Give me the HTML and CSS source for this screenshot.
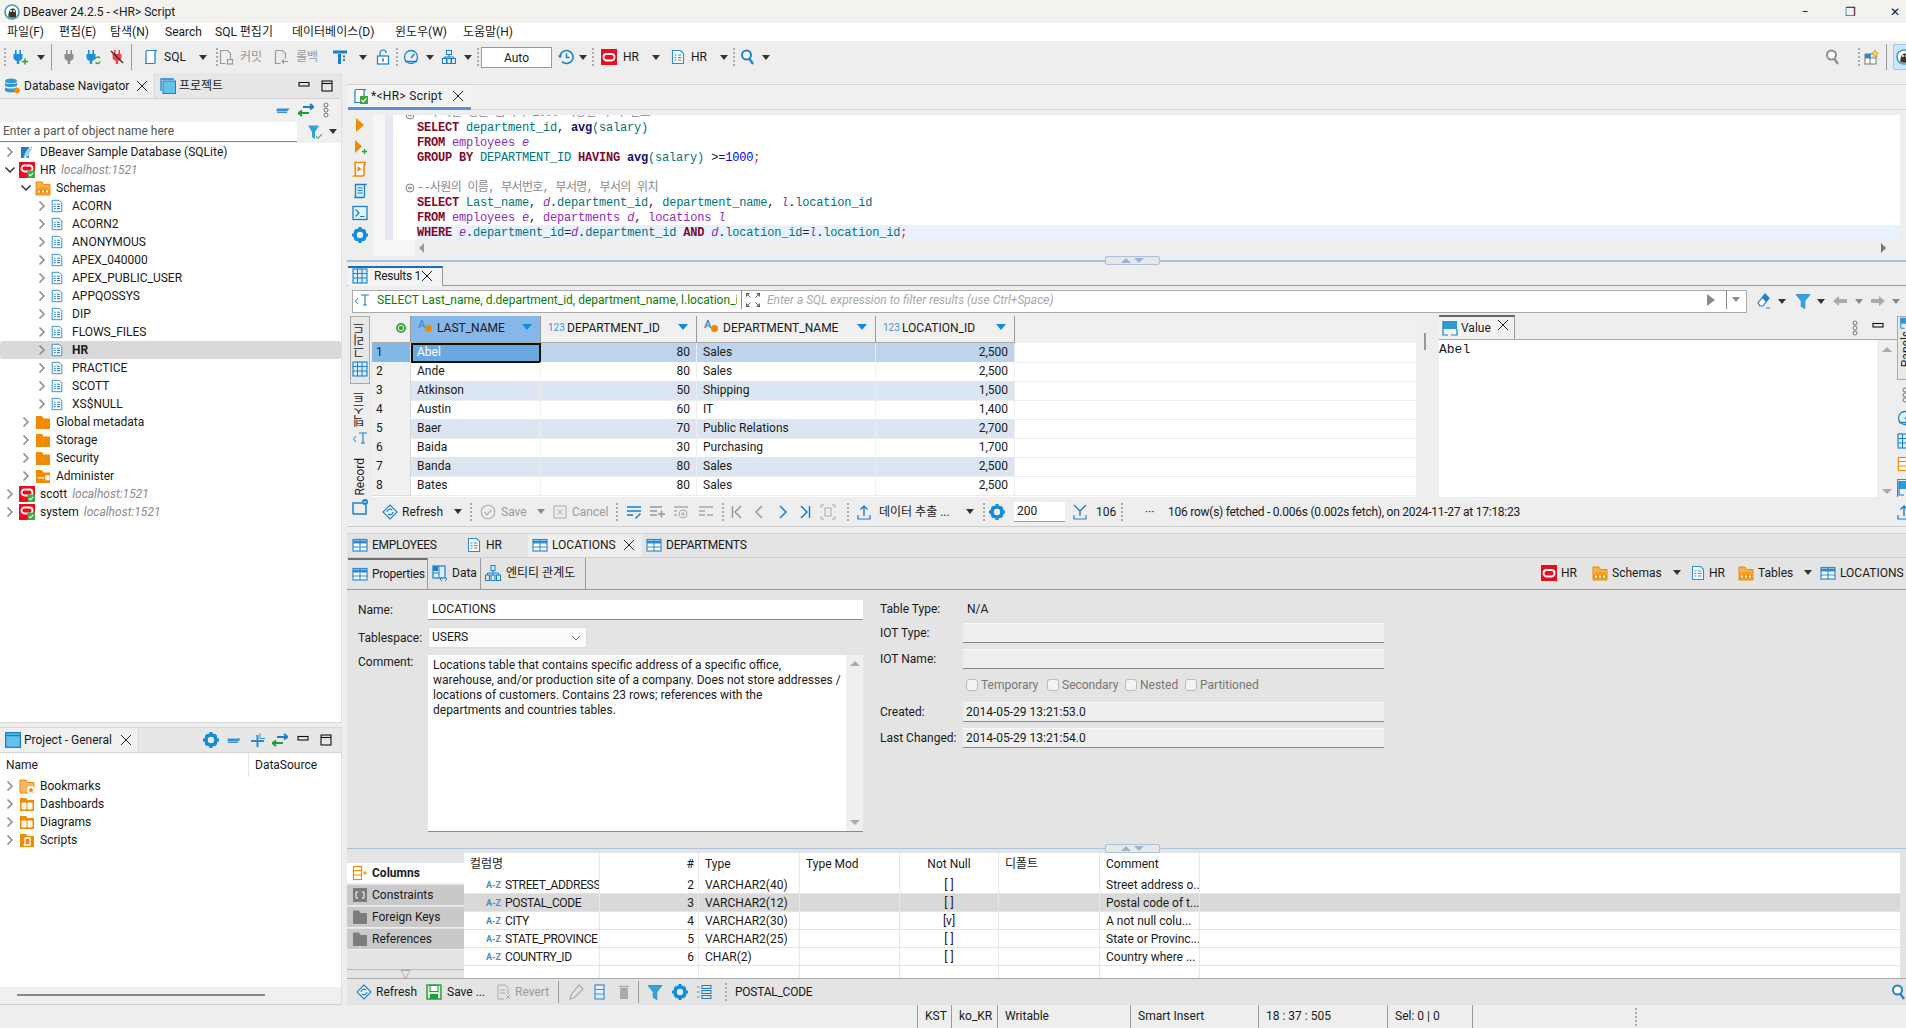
FILE: index.html
```html
<!DOCTYPE html>
<html lang="ko">
<head>
<meta charset="utf-8">
<title>DBeaver 24.2.5 - &lt;HR&gt; Script</title>
<link rel="stylesheet" href="styles.css">
</head>
<body>
<svg class="defs" xmlns="http://www.w3.org/2000/svg">
  <symbol id="plug" viewBox="0 0 16 16"><path fill="currentColor" d="M5 1h1.600v4H5zM9.400 1H11v4H9.400zM3.500 5h9v3.500c0 2-1.600 3.200-3.300 3.400V15H6.800v-3.100C5.100 11.700 3.500 10.500 3.500 8.500z"/></symbol>
  <symbol id="plug-add" viewBox="0 0 16 16"><path fill="#1b8fd8" d="M3 1h1.600v4H3zM7.400 1H9v4H7.400zM1.500 5h9v3.500c0 2-1.600 3.200-3.300 3.400V15H4.800v-3.100C3.100 11.700 1.500 10.500 1.500 8.500z"/><path d="M10 12.500h6M13 9.500v6" stroke="#2aa52a" stroke-width="1.400" fill="none"/></symbol>
  <symbol id="plug-sync" viewBox="0 0 16 16"><path fill="#1b8fd8" d="M3 1h1.600v4H3zM7.400 1H9v4H7.400zM1.500 5h9v3.500c0 2-1.600 3.200-3.300 3.400V15H4.800v-3.100C3.100 11.700 1.500 10.500 1.500 8.500z"/><path d="M10 10a3 3 0 0 1 5-1M15.500 12.500a3 3 0 0 1-5 1" stroke="#2aa52a" stroke-width="1.400" fill="none"/></symbol>
  <symbol id="plug-x" viewBox="0 0 16 16"><path fill="#ef4444" d="M5 1h1.600v4H5zM9.400 1H11v4H9.400zM3.500 5h9v3.500c0 2-1.600 3.200-3.300 3.400V15H6.800v-3.100C5.100 11.700 3.500 10.500 3.500 8.500z"/><path d="M2 2l12 12" stroke="#333" stroke-width="1.400"/></symbol>
  <symbol id="sql" viewBox="0 0 16 16"><path d="M4.500 1.500h8.500c-.8.700-1 1.500-1 2.500v9.500c0 .6-.5 1-1 1H2c.8 0 1-.6 1-1.200V3c0-.8.700-1.500 1.500-1.500z" fill="#fff" stroke="#1b7fcb" stroke-width="1.200"/></symbol>
  <symbol id="dbs" viewBox="0 0 16 16"><path d="M2 3h8v11H2z" fill="#1b7fcb"/><path d="M5 14c1-5 4-10 9-13-1 5-4 10-7 13z" fill="#9ad0f0" stroke="#fff" stroke-width=".6"/></symbol>
  <symbol id="sql-ok" viewBox="0 0 16 16"><path d="M4.500 1.500h8.500c-.8.700-1 1.500-1 2.500v9.500c0 .6-.5 1-1 1H2c.8 0 1-.6 1-1.200V3c0-.8.700-1.500 1.500-1.500z" fill="#fff" stroke="#1b7fcb" stroke-width="1.200"/><rect x="8" y="8" width="8" height="8" fill="#3fa63f"/><path d="M9.500 12l1.800 1.800 3-3.300" stroke="#fff" stroke-width="1.200" fill="none"/></symbol>
  <symbol id="commit" viewBox="0 0 16 16"><path d="M2.500 1.500h7l3 3v5M2.500 1.500v13h5" fill="none" stroke="#999" stroke-width="1.200"/><rect x="9.500" y="10.500" width="5" height="4.500" fill="none" stroke="#999" stroke-width="1.200"/></symbol>
  <symbol id="rollback" viewBox="0 0 16 16"><path d="M2.500 1.500h7l3 3v5M2.500 1.500v13h5" fill="none" stroke="#999" stroke-width="1.200"/><path d="M9 12.500h6M11 10.500l-2 2 2 2" fill="none" stroke="#999" stroke-width="1.200"/></symbol>
  <symbol id="tgrid" viewBox="0 0 16 16"><path d="M1 1.500h14v3H1z" fill="#1b7fcb"/><path d="M6 5h3v10H6z" fill="#1b7fcb"/><path d="M11 6.500h2v2h-2zM11 10h2v2h-2z" fill="#1b7fcb"/></symbol>
  <symbol id="lock" viewBox="0 0 16 16"><rect x="2.500" y="7" width="11" height="8" fill="#fff" stroke="#1b7fcb" stroke-width="1.200"/><path d="M5 7V4a3 3 0 0 1 6 0" fill="none" stroke="#1b7fcb" stroke-width="1.200"/><path d="M8 9.500v3" stroke="#1b7fcb" stroke-width="1.600"/></symbol>
  <symbol id="gauge" viewBox="0 0 16 16"><circle cx="8" cy="8" r="6.500" fill="#e4f2fb" stroke="#1b7fcb" stroke-width="1.300"/><path d="M8 9l3.500-4" stroke="#1b7fcb" stroke-width="1.400"/><path d="M2 12.500h12" stroke="#1b7fcb" stroke-width="1.400"/></symbol>
  <symbol id="dbtree" viewBox="0 0 16 16"><g fill="#e4f2fb" stroke="#1b7fcb"><rect x="5.500" y="1.500" width="5" height="4"/><rect x="1.500" y="9.500" width="4" height="5"/><rect x="6" y="9.500" width="4" height="5"/><rect x="10.500" y="9.500" width="4" height="5"/></g><path d="M8 5.500v2.500M3.500 9.500V8h9v1.500" fill="none" stroke="#1b7fcb"/></symbol>
  <symbol id="clock" viewBox="0 0 16 16"><path d="M2 8a6.500 6.500 0 1 1 2 4.700" fill="none" stroke="#1b7fcb" stroke-width="1.600"/><path d="M0 6.500h4L2 9.500z" fill="#1b7fcb"/><path d="M8.500 4.500V8.500h3" fill="none" stroke="#1b7fcb" stroke-width="1.400"/></symbol>
  <symbol id="ora" viewBox="0 0 16 16"><rect width="16" height="16" fill="#ee0b1e"/><rect x="2.500" y="5" width="11" height="6.500" rx="3.200" fill="none" stroke="#fff" stroke-width="1.800"/></symbol>
  <symbol id="ora-ok" viewBox="0 0 16 16"><rect width="16" height="16" fill="#ee0b1e"/><rect x="2.500" y="3.500" width="11" height="6" rx="3" fill="none" stroke="#fff" stroke-width="1.800"/><rect x="8.500" y="8.500" width="7.500" height="7.500" fill="#46a546"/><path d="M10 12.300l1.500 1.500 2.700-3" stroke="#fff" stroke-width="1.100" fill="none"/></symbol>
  <symbol id="doc" viewBox="0 0 16 16"><path d="M2.500 1.500h8l3 3v10h-11z" fill="#fff" stroke="#2f8bd0" stroke-width="1.100"/><path d="M4.500 6h2M8 6h3.500M4.500 8.500h2M8 8.500h3.500M4.500 11h2M8 11h3.500" stroke="#2f8bd0" stroke-width="1.200"/></symbol>
  <symbol id="search" viewBox="0 0 16 16"><circle cx="6.500" cy="6" r="4.500" fill="#fff" stroke="currentColor" stroke-width="2"/><path d="M9.500 10l3.500 5" stroke="currentColor" stroke-width="2.200"/></symbol>
  <symbol id="persp" viewBox="0 0 16 16"><rect x="2" y="5" width="11" height="10" fill="#fff" stroke="#777" stroke-width="1"/><path d="M2 9h11M7 9v6" stroke="#777"/><rect x="2" y="5" width="6" height="4" fill="#2f8bd0"/><path d="M12 1l1.200 2.300L15.500 4l-2 1.500.5 2.500-2-1.300L10 8l.5-2.500L8.500 4l2.300-.7z" fill="#f8d95a" stroke="#b88a1e" stroke-width=".6"/></symbol>
  <symbol id="beaver" viewBox="0 0 16 16"><circle cx="8" cy="8" r="7" fill="#fff" stroke="#3a9eb0" stroke-width="1.600"/><path d="M4.500 13c-.5-4 1-8 4-8.500s4 3 3.500 8.500c-2 1-5 1-7.500 0z" fill="#3b3330"/><circle cx="7" cy="7" r="1" fill="#fff"/><circle cx="10" cy="7" r="1" fill="#fff"/></symbol>
  <symbol id="dbnav" viewBox="0 0 16 16"><g fill="#2f9ad6"><ellipse cx="7" cy="3" rx="6" ry="2.500"/><path d="M1 4.500c1 2 11 2 12 0v3c-1 2-11 2-12 0zM1 9c1 2 11 2 12 0v3.500c-1 2.500-11 2.500-12 0z"/></g><circle cx="13" cy="12.500" r="2.800" fill="#f08a00"/></symbol>
  <symbol id="window" viewBox="0 0 16 16"><rect x=".7" y=".7" width="14.600" height="14.600" fill="#62c4ee" stroke="#1b7fcb" stroke-width="1.300"/><path d="M.7 3.500h14.600" stroke="#1b7fcb" stroke-width="1.500"/></symbol>
  <symbol id="window2" viewBox="0 0 16 16"><rect x="3" y="3" width="12.500" height="12.500" fill="#62c4ee" stroke="#1b7fcb"/><path d="M1 13V1h13" fill="none" stroke="#1b7fcb" stroke-width="1.300"/></symbol>
  <symbol id="x" viewBox="0 0 12 12"><path d="M1 1l10 10M11 1L1 11" stroke="#222" stroke-width="1" fill="none"/></symbol>
  <symbol id="min" viewBox="0 0 12 12"><rect x="1" y="2.500" width="10" height="3.500" fill="none" stroke="#111" stroke-width="1.100"/></symbol>
  <symbol id="max" viewBox="0 0 12 12"><rect x="1" y="1" width="10" height="10" fill="none" stroke="#111" stroke-width="1.100"/><path d="M1 3.500h10" stroke="#111" stroke-width="1.100"/></symbol>
  <symbol id="collapse" viewBox="0 0 16 16"><path d="M2 7h12L12 9H2zM2 10.500h10" fill="#3a8fd2" stroke="#3a8fd2"/></symbol>
  <symbol id="plus" viewBox="0 0 16 16"><path d="M1 9h13M7.500 3v12" stroke="#2f8bd0" stroke-width="2"/><path d="M10 1.500v5h5" stroke="#2f8bd0" stroke-width="1" fill="none"/></symbol>
  <symbol id="sync" viewBox="0 0 16 16"><path d="M5 5h10M12 2l3.500 3L12 7.500" stroke="#1b7fcb" stroke-width="2" fill="none"/><path d="M11 11H1M4 8.500L.5 11 4 14" stroke="#1f9d3c" stroke-width="2" fill="none"/></symbol>
  <symbol id="links" viewBox="0 0 8 16"><g fill="none" stroke="#777"><circle cx="4" cy="3" r="2"/><circle cx="4" cy="8" r="2"/><circle cx="4" cy="13" r="2"/></g></symbol>
  <symbol id="funnel" viewBox="0 0 16 16"><path d="M1 1.500h14L9.800 8v7.500l-3.600-2V8z" fill="#33a3dc" stroke="#1b7fcb" stroke-width=".7"/></symbol>
  <symbol id="funnel-ok" viewBox="0 0 16 16"><path d="M1 1.500h11L8 8v7l-3-1.800V8z" fill="#33a3dc"/><path d="M9 12l2 2.500 4-4.500" stroke="#3fa63f" fill="none" stroke-width="1.100"/></symbol>
  <symbol id="gear" viewBox="0 0 16 16"><circle cx="8" cy="8" r="5" fill="none" stroke="#0f8dd6" stroke-width="3.600"/><path d="M6.500 0h3v3h-3zM6.500 13h3v3h-3zM0 6.500h3v3H0zM13 6.500h3v3h-3zM1.800 3.900l2.100-2.100 2 2-2.100 2.100zM10.100 12.200l2.100-2.100 2 2-2.100 2.100zM12.200 1.800l2 2.100-2.100 2-2-2.100zM3.900 10.100l2 2.100-2.100 2-2-2.100z" fill="#0f8dd6"/></symbol>
  <symbol id="folder" viewBox="0 0 16 16"><path d="M1 2h6l1.500 2.500H15V15H1z" fill="#f08a00"/></symbol>
  <symbol id="fschema" viewBox="0 0 16 16"><path d="M1 2h6l1.500 2.500H15V15H1z" fill="#f8b04c" stroke="#f08a00"/><g fill="#fff" stroke="#f08a00"><rect x="2.500" y="10" width="3" height="3"/><rect x="6.500" y="10" width="3" height="3"/><rect x="10.500" y="10" width="3" height="3"/></g><path d="M3.500 8h9" stroke="#f08a00"/></symbol>
  <symbol id="fadmin" viewBox="0 0 16 16"><path d="M1 2h6l1.500 2.500H15V15H1z" fill="#f08a00"/><path d="M3 9.800h6M11 8h3v1.200h-2v1.200h2v1.200h-3z" stroke="#fff" stroke-width="1.300" fill="#fff"/></symbol>
  <symbol id="fbook" viewBox="0 0 16 16"><path d="M1 2h6l1.500 2.500H15V15H1z" fill="#fbb56a" stroke="#f08a00"/><circle cx="12" cy="12" r="4" fill="#fff"/><path d="M12 9l.9 2h2.100l-1.700 1.400.7 2.300-2-1.300-2 1.300.7-2.300L9 11h2.100z" fill="#f08a00"/></symbol>
  <symbol id="fdash" viewBox="0 0 16 16"><path d="M1 2h6l1.500 2H15v11H1z" fill="#f08a00"/><path d="M3 7h4v6H3zM9 7h4v6H9z" fill="#fff3df" stroke="#fff"/></symbol>
  <symbol id="fscript" viewBox="0 0 16 16"><path d="M1 2h6l1.500 2H15v11H1z" fill="#f08a00"/><path d="M6 6h5v7H4.500" fill="none" stroke="#fff" stroke-width="1.300"/><path d="M6 6v7" stroke="#fff" stroke-width="1.300"/></symbol>
  <symbol id="chev-r" viewBox="0 0 12 12"><path d="M3.500 1.500L8 6l-4.500 4.500" fill="none" stroke="#8a8a8a" stroke-width="1.500"/></symbol>
  <symbol id="chev-d" viewBox="0 0 12 12"><path d="M1.500 3.500L6 8l4.500-4.500" fill="none" stroke="#333" stroke-width="1.500"/></symbol>
  <symbol id="chev-thin" viewBox="0 0 12 12"><path d="M2 4l4 4 4-4" fill="none" stroke="#777" stroke-width="1"/></symbol>
  <symbol id="table" viewBox="0 0 16 16"><rect x="1" y="2.500" width="14" height="11.500" fill="#fff" stroke="#2f8bd0" stroke-width="1.200"/><path d="M1 3.500h14v3H1z" fill="#2f8bd0"/><path d="M8 3v11M1 10h14" stroke="#2f8bd0" stroke-width="1.100"/></symbol>
  <symbol id="grid" viewBox="0 0 16 16"><rect x="1" y="1" width="14" height="14" fill="#d9eefb" stroke="#1b7fcb" stroke-width="1.100"/><path d="M1 5.500h14M1 10h14M5.500 1v14M10 1v14" stroke="#1b7fcb"/></symbol>
  <symbol id="run" viewBox="0 0 16 16"><path d="M4 1l8 7-8 7z" fill="#f08a00"/></symbol>
  <symbol id="run-add" viewBox="0 0 16 16"><path d="M3 1l7 6.500L3 14z" fill="#f08a00"/><path d="M10 12.500h5M12.500 10v5" stroke="#2aa52a" stroke-width="1.300"/></symbol>
  <symbol id="run-script" viewBox="0 0 16 16"><path d="M3 1.500h10v2c-.8 0-1 .5-1 1v9c0 1-.6 1.500-1.500 1.500H2.500c.6-.4 1-1 1-1.800z" fill="#fff" stroke="#f08a00" stroke-width="1.600"/><path d="M5.500 5l4 3-4 3z" fill="#f08a00"/></symbol>
  <symbol id="explain" viewBox="0 0 16 16"><path d="M3.500 1.500h10c-.8.500-1 1-1 2v10c0 .8-.5 1-1 1h-9c.6-.3 1-.8 1-1.500z" fill="#d9eefb" stroke="#1b7fcb" stroke-width="1.300"/><path d="M5.500 5h5M5.500 7.500h5M5.500 10h5" stroke="#1b7fcb"/></symbol>
  <symbol id="term" viewBox="0 0 16 16"><rect x="1" y="1.500" width="14" height="13" fill="#e4f2fb" stroke="#1b7fcb" stroke-width="1.300"/><path d="M3.500 4.500L7 8l-3.500 3.500M8 11.500h4.500" fill="none" stroke="#1b7fcb" stroke-width="1.200"/></symbol>
  <symbol id="fold" viewBox="0 0 10 10"><circle cx="5" cy="5" r="4" fill="#f2f2f2" stroke="#888"/><path d="M3 5h4" stroke="#555"/></symbol>
  <symbol id="sqlt" viewBox="0 0 16 16"><path d="M7 3h8M11 3v10M9 13h4" stroke="#1b7fcb" fill="none" stroke-width="1.100"/><path d="M4 6L1.500 9 4 12" stroke="#1b7fcb" fill="none"/></symbol>
  <symbol id="expand" viewBox="0 0 16 16"><path d="M1 1h4L1 5zM15 1v4l-4-4zM1 15v-4l4 4zM15 15h-4l4-4z" fill="#666"/><path d="M2.500 2.500l3 3M13.500 2.500l-3 3M2.500 13.500l3-3M13.500 13.500l-3-3" stroke="#666"/></symbol>
  <symbol id="eraser" viewBox="0 0 16 16"><path d="M9 1l4 4-6 8H4l-2-3z" fill="#fff" stroke="#1b7fcb" stroke-width="1.200"/><path d="M9 1l4 4-3 4-4-4z" fill="#1b7fcb"/><path d="M10 15h4" stroke="#1b7fcb"/></symbol>
  <symbol id="back" viewBox="0 0 16 16"><path d="M1 8l6-5v3h8v4H7v3z" fill="#aaa"/></symbol>
  <symbol id="fwd" viewBox="0 0 16 16"><path d="M15 8L9 3v3H1v4h8v3z" fill="#aaa"/></symbol>
  <symbol id="refresh" viewBox="0 0 16 16"><path d="M8 1l7 7-7 7-7-7z" fill="#e8f4fc" stroke="#1b7fcb" stroke-width="1.100"/><path d="M5 8a3 3 0 0 1 5-2M11 8a3 3 0 0 1-5 2" fill="none" stroke="#1b7fcb" stroke-width="1.200"/></symbol>
  <symbol id="save-off" viewBox="0 0 16 16"><circle cx="8" cy="8" r="6.800" fill="none" stroke="#aaa" stroke-width="1.100"/><path d="M4.500 8l2.500 2.800 4.500-5" fill="none" stroke="#aaa" stroke-width="1.200"/></symbol>
  <symbol id="cancel-off" viewBox="0 0 16 16"><rect x="2" y="2" width="12" height="12" fill="none" stroke="#aaa"/><path d="M5 5l6 6M11 5l-6 6" stroke="#aaa"/></symbol>
  <symbol id="ed" viewBox="0 0 16 16"><path d="M1 3h14M1 7h14M1 11h6" stroke="#1b7fcb" stroke-width="1.500"/><path d="M9 14l5-5 1 1-5 5z" fill="#1b7fcb"/></symbol>
  <symbol id="radd" viewBox="0 0 16 16"><path d="M1 3h12M1 7h7M1 11h7" stroke="#999" stroke-width="1.500"/><path d="M9 10h7M12.500 6.500v7" stroke="#999" stroke-width="1.500"/></symbol>
  <symbol id="rdup" viewBox="0 0 16 16"><path d="M1 3h14M1 7h3M1 11h3" stroke="#aaa" stroke-width="1.500"/><circle cx="10" cy="10" r="4" fill="none" stroke="#aaa"/><path d="M10 8v4M8 10h4" stroke="#aaa"/></symbol>
  <symbol id="rdel" viewBox="0 0 16 16"><path d="M1 3h14M1 7h6M1 11h6M9 11h6" stroke="#aaa" stroke-width="1.500"/></symbol>
  <symbol id="first" viewBox="0 0 16 16"><path d="M3.500 2v12" stroke="#999" stroke-width="1.500"/><path d="M12 2L6 8l6 6" fill="none" stroke="#999" stroke-width="1.500"/></symbol>
  <symbol id="prev" viewBox="0 0 16 16"><path d="M11 2L5 8l6 6" fill="none" stroke="#999" stroke-width="1.500"/></symbol>
  <symbol id="next" viewBox="0 0 16 16"><path d="M5 2l6 6-6 6" fill="none" stroke="#1b7fcb" stroke-width="1.500"/></symbol>
  <symbol id="last" viewBox="0 0 16 16"><path d="M4 2l6 6-6 6" fill="none" stroke="#1b7fcb" stroke-width="1.500"/><path d="M12.500 2v12" stroke="#1b7fcb" stroke-width="1.500"/></symbol>
  <symbol id="page" viewBox="0 0 16 16"><path d="M1 4V1h3M12 1h3v3M15 12v3h-3M4 15H1v-3" fill="none" stroke="#aaa"/><rect x="5" y="4" width="6" height="8" fill="none" stroke="#aaa"/></symbol>
  <symbol id="export" viewBox="0 0 16 16"><path d="M8 12V2M4.500 5.500L8 2l3.500 3.500" fill="none" stroke="#1b7fcb" stroke-width="1.400"/><path d="M2 11v4h12v-4" fill="none" stroke="#1b7fcb" stroke-width="1.200"/></symbol>
  <symbol id="fetch" viewBox="0 0 16 16"><path d="M2 1l6 6 6-6M8 7v5" fill="none" stroke="#1b7fcb" stroke-width="1.400"/><path d="M2 11v4h12v-4" fill="none" stroke="#1b7fcb" stroke-width="1.100"/></symbol>
  <symbol id="note" viewBox="0 0 16 16"><path d="M1 15V4h9M1 15h13V6" fill="none" stroke="#1b7fcb" stroke-width="1.500"/><circle cx="13" cy="3" r="3" fill="#1b7fcb"/><path d="M11.500 3h3" stroke="#fff"/></symbol>
  <symbol id="value" viewBox="0 0 16 16"><rect x="1" y="1" width="14" height="8" fill="#2f9ad6"/><path d="M1 1v14h5M15 9v6H9" fill="none" stroke="#1b7fcb" stroke-width="1.200"/></symbol>
  <symbol id="dataic" viewBox="0 0 16 16"><rect x="1" y="1" width="12" height="12" fill="#d9eefb" stroke="#1b7fcb" stroke-width="1.200"/><path d="M1 1h5v5H1z" fill="#1b7fcb"/><path d="M1 8h6M7 1v12" stroke="#1b7fcb"/><path d="M10 12l-2 2 2 2M13 12l2 2-2 2" fill="none" stroke="#1b7fcb"/></symbol>
  <symbol id="erd" viewBox="0 0 16 16"><g fill="none" stroke="#1b7fcb"><rect x="6" y=".5" width="4" height="5" fill="#d9eefb"/><rect x=".5" y="10" width="4" height="5.500"/><rect x="6" y="10" width="4" height="5.500"/><rect x="11.500" y="10" width="4" height="5.500"/><path d="M8 5.500V8M2.500 10V8h11v2M8 8v2"/></g></symbol>
  <symbol id="cols" viewBox="0 0 16 16"><rect x="1.500" y="1.500" width="8" height="13" fill="#fff" stroke="#f08a00" stroke-width="1.200"/><path d="M1.500 5.500h8M1.500 10h8" stroke="#f08a00"/><path d="M11 8h4M13 6v4" stroke="#f08a00"/></symbol>
  <symbol id="constr" viewBox="0 0 16 16"><rect x="1" y="1" width="14" height="14" fill="#7c7c7c"/><path d="M6 5H4v6h2M10 5h2v6h-2" fill="none" stroke="#fff"/></symbol>
  <symbol id="gfolder" viewBox="0 0 16 16"><path d="M1 1.500h6l1.500 2.500H15v11H1z" fill="#7c7c7c"/></symbol>
  <symbol id="saveg" viewBox="0 0 16 16"><rect x="1" y="1" width="14" height="14" fill="#d8f0d0" stroke="#1f9d3c" stroke-width="1.400"/><rect x="4" y="1.500" width="8" height="6" fill="#fff" stroke="#1f9d3c"/><rect x="4" y="10" width="8" height="5" fill="#1f9d3c"/></symbol>
  <symbol id="revert" viewBox="0 0 16 16"><path d="M2 1h7l3 3v6M2 1v14h6" fill="none" stroke="#aaa"/><path d="M4 6h5M4 9h5M10 11l4 4M14 11l-4 4" stroke="#aaa"/></symbol>
  <symbol id="pencil" viewBox="0 0 16 16"><path d="M11 1l4 4-9 9-4 1 1-4z" fill="none" stroke="#aaa" stroke-width="1.200"/></symbol>
  <symbol id="colb" viewBox="0 0 16 16"><rect x="3" y="1" width="9" height="14" fill="#e4f2fb" stroke="#3a8fd2" stroke-width="1.200"/><path d="M3 5.500h9M3 10h9" stroke="#3a8fd2"/></symbol>
  <symbol id="trash" viewBox="0 0 16 16"><path d="M4 4h8v11H4z" fill="#aaa"/><path d="M3 2.500h10" stroke="#aaa" stroke-width="1.400"/></symbol>
  <symbol id="struct" viewBox="0 0 16 16"><g fill="none" stroke="#1b7fcb"><rect x="6" y="1.500" width="9" height="3"/><rect x="6" y="6.500" width="9" height="3"/><rect x="6" y="11.500" width="9" height="3"/></g><path d="M1 3h3M1 8h3M1 13h3" stroke="#1f9d3c" stroke-dasharray="1.500 1"/></symbol>
</svg>

<div class="app">
  <header class="titlebar">
    <svg class="ic logo"><use href="#beaver"/></svg>
    <span class="title">DBeaver 24.2.5 - &lt;HR&gt; Script</span>
    <span class="winctl win-min">−</span><span class="winctl win-res">❐</span><span class="winctl win-x">✕</span>
  </header>
  <nav class="menubar">
    <span class="m w37 ml7">파일(F)</span><span class="m w37 ml15">편집(E)</span><span class="m w41 ml14">탐색(N)</span><span class="m w36 ml14">Search</span><span class="m w61 ml14">SQL 편집기</span><span class="m w88 ml16">데이터베이스(D)</span><span class="m w54 ml15">윈도우(W)</span><span class="m w53 ml14">도움말(H)</span>
  </nav>
  <div class="toolbar">
    <i class="grip ml4"></i>
    <svg class="ic ml6"><use href="#plug-add"/></svg><i class="dd ml9"></i><i class="sep ml6"></i>
    <svg class="ic ml9 c-gray"><use href="#plug"/></svg><svg class="ic ml8"><use href="#plug-sync"/></svg><svg class="ic ml8"><use href="#plug-x"/></svg><i class="sep ml6"></i>
    <svg class="ic ml11"><use href="#sql"/></svg><span class="t ml5 w23">SQL</span><i class="dd ml12"></i><i class="grip ml9"></i>
    <svg class="ic"><use href="#commit"/></svg><span class="t off ml6 w22">커밋</span><svg class="ic ml11"><use href="#rollback"/></svg><span class="t off ml7 w20">롤백</span>
    <svg class="ic ml16"><use href="#tgrid"/></svg><i class="dd ml11"></i><svg class="ic ml8"><use href="#lock"/></svg><i class="grip ml5"></i>
    <svg class="ic ml5"><use href="#gauge"/></svg><i class="dd ml7"></i><svg class="ic ml7"><use href="#dbtree"/></svg><i class="dd ml7"></i><i class="grip ml5"></i>
    <span class="autobox ml2">Auto</span>
    <svg class="ic ml6"><use href="#clock"/></svg><i class="dd ml5"></i><i class="grip ml5"></i>
    <svg class="ic ml7"><use href="#ora"/></svg><span class="t ml6 w15">HR</span><i class="dd ml14"></i>
    <svg class="ic ml10"><use href="#doc"/></svg><span class="t ml5 w16">HR</span><i class="dd ml13"></i><i class="grip ml5"></i>
    <svg class="ic ml5 c-blue"><use href="#search"/></svg><i class="dd ml6"></i>
    <svg class="ic ml-far c-gray"><use href="#search"/></svg><i class="grip ml17"></i><svg class="ic ml3"><use href="#persp"/></svg><i class="sep ml7"></i>
    <span class="perspbtn ml6"><svg class="ic"><use href="#beaver"/></svg></span>
  </div>

  <main class="main">
    <section class="leftcol">
      <div class="panel p-nav">
        <div class="strip">
          <div class="vtab w155"><svg class="ic ml4"><use href="#dbnav"/></svg><span class="t ml4 w105">Database Navigator</span><svg class="x ml7"><use href="#x"/></svg></div>
          <svg class="ic ml5"><use href="#window2"/></svg><span class="t ml3 w48">프로젝트</span>
          <svg class="x ml71"><use href="#min"/></svg><svg class="x ml11"><use href="#max"/></svg>
        </div>
        <div class="navtools"><svg class="ic"><use href="#collapse"/></svg><svg class="ic ml7"><use href="#sync"/></svg><svg class="links ml8"><use href="#links"/></svg></div>
        <div class="navfilter"><span class="filterin">Enter a part of object name here</span><svg class="ic ml10"><use href="#funnel-ok"/></svg><i class="dd ml6"></i></div>
        <div class="tree">
          <div class="tr"><svg class="ch"><use href="#chev-r"/></svg><svg class="ic ml3"><use href="#dbs"/></svg><span class="tl">DBeaver Sample Database (SQLite)</span></div>
          <div class="tr"><svg class="ch"><use href="#chev-d"/></svg><svg class="ic ml3"><use href="#ora-ok"/></svg><span class="tl">HR <em>localhost:1521</em></span></div>
          <div class="tr l1"><svg class="ch"><use href="#chev-d"/></svg><svg class="ic ml3"><use href="#fschema"/></svg><span class="tl">Schemas</span></div>
          <div class="tr l2"><svg class="ch"><use href="#chev-r"/></svg><svg class="ic ml3"><use href="#doc"/></svg><span class="tl">ACORN</span></div>
          <div class="tr l2"><svg class="ch"><use href="#chev-r"/></svg><svg class="ic ml3"><use href="#doc"/></svg><span class="tl">ACORN2</span></div>
          <div class="tr l2"><svg class="ch"><use href="#chev-r"/></svg><svg class="ic ml3"><use href="#doc"/></svg><span class="tl">ANONYMOUS</span></div>
          <div class="tr l2"><svg class="ch"><use href="#chev-r"/></svg><svg class="ic ml3"><use href="#doc"/></svg><span class="tl">APEX_040000</span></div>
          <div class="tr l2"><svg class="ch"><use href="#chev-r"/></svg><svg class="ic ml3"><use href="#doc"/></svg><span class="tl">APEX_PUBLIC_USER</span></div>
          <div class="tr l2"><svg class="ch"><use href="#chev-r"/></svg><svg class="ic ml3"><use href="#doc"/></svg><span class="tl">APPQOSSYS</span></div>
          <div class="tr l2"><svg class="ch"><use href="#chev-r"/></svg><svg class="ic ml3"><use href="#doc"/></svg><span class="tl">DIP</span></div>
          <div class="tr l2"><svg class="ch"><use href="#chev-r"/></svg><svg class="ic ml3"><use href="#doc"/></svg><span class="tl">FLOWS_FILES</span></div>
          <div class="tr l2 sel"><svg class="ch"><use href="#chev-r"/></svg><svg class="ic ml3"><use href="#doc"/></svg><span class="tl b">HR</span></div>
          <div class="tr l2"><svg class="ch"><use href="#chev-r"/></svg><svg class="ic ml3"><use href="#doc"/></svg><span class="tl">PRACTICE</span></div>
          <div class="tr l2"><svg class="ch"><use href="#chev-r"/></svg><svg class="ic ml3"><use href="#doc"/></svg><span class="tl">SCOTT</span></div>
          <div class="tr l2"><svg class="ch"><use href="#chev-r"/></svg><svg class="ic ml3"><use href="#doc"/></svg><span class="tl">XS$NULL</span></div>
          <div class="tr l1"><svg class="ch"><use href="#chev-r"/></svg><svg class="ic ml3"><use href="#folder"/></svg><span class="tl">Global metadata</span></div>
          <div class="tr l1"><svg class="ch"><use href="#chev-r"/></svg><svg class="ic ml3"><use href="#folder"/></svg><span class="tl">Storage</span></div>
          <div class="tr l1"><svg class="ch"><use href="#chev-r"/></svg><svg class="ic ml3"><use href="#folder"/></svg><span class="tl">Security</span></div>
          <div class="tr l1"><svg class="ch"><use href="#chev-r"/></svg><svg class="ic ml3"><use href="#fadmin"/></svg><span class="tl">Administer</span></div>
          <div class="tr"><svg class="ch"><use href="#chev-r"/></svg><svg class="ic ml3"><use href="#ora-ok"/></svg><span class="tl">scott <em>localhost:1521</em></span></div>
          <div class="tr"><svg class="ch"><use href="#chev-r"/></svg><svg class="ic ml3"><use href="#ora-ok"/></svg><span class="tl">system <em>localhost:1521</em></span></div>
        </div>
      </div>
      <div class="panel p-proj">
        <div class="strip s25">
          <div class="vtab w139"><svg class="ic ml5"><use href="#window"/></svg><span class="t ml3 w89">Project - General</span><svg class="x ml7"><use href="#x"/></svg></div>
          <svg class="ic ml64"><use href="#gear"/></svg><svg class="ic ml7"><use href="#collapse"/></svg><svg class="ic ml8"><use href="#plus"/></svg><svg class="ic ml6"><use href="#sync"/></svg>
          <svg class="x ml9"><use href="#min"/></svg><svg class="x ml11"><use href="#max"/></svg>
        </div>
        <div class="projhead"><span class="ph-name">Name</span><span class="ph-ds">DataSource</span></div>
        <div class="projtree">
          <div class="tr"><svg class="ch"><use href="#chev-r"/></svg><svg class="ic ml3"><use href="#fbook"/></svg><span class="tl">Bookmarks</span></div>
          <div class="tr"><svg class="ch"><use href="#chev-r"/></svg><svg class="ic ml3"><use href="#fdash"/></svg><span class="tl">Dashboards</span></div>
          <div class="tr"><svg class="ch"><use href="#chev-r"/></svg><svg class="ic ml3"><use href="#fdash"/></svg><span class="tl">Diagrams</span></div>
          <div class="tr"><svg class="ch"><use href="#chev-r"/></svg><svg class="ic ml3"><use href="#fscript"/></svg><span class="tl">Scripts</span></div>
        </div>
        <div class="projscroll"><i class="thumb"></i></div>
      </div>
    </section>

    <section class="rightcol">
      <div class="edstrip">
        <div class="edtab"><svg class="ic ml4"><use href="#sql-ok"/></svg><span class="t ml3 w76 edt">*&lt;HR&gt; Script</span><svg class="x ml5"><use href="#x"/></svg></div>
      </div>
      <div class="editor">
        <aside class="edside">
          <svg class="ic"><use href="#run"/></svg><svg class="ic"><use href="#run-add"/></svg><svg class="ic"><use href="#run-script"/></svg><svg class="ic"><use href="#explain"/></svg><svg class="ic"><use href="#term"/></svg><svg class="ic"><use href="#gear"/></svg>
        </aside>
        <div class="edbody">
          <div class="edtext">
            <div class="rul1"></div><div class="rul2"></div>
            <div class="code">
              <div class="ln cut"><span class="gut"><svg class="fold"><use href="#fold"/></svg></span><span class="src"><span class="cm">--부서별 평균 급여가 1000 이상인 부서 번호</span></span></div>
              <div class="ln"><span class="gut"></span><span class="src"><span class="kw">SELECT</span> <span class="id">department_id</span>, <span class="fn">avg</span><span class="id">(salary)</span></span></div>
              <div class="ln"><span class="gut"></span><span class="src"><span class="kw">FROM</span> <span class="tb">employees</span> <span class="al">e</span></span></div>
              <div class="ln"><span class="gut"></span><span class="src"><span class="kw">GROUP BY</span> <span class="id">DEPARTMENT_ID</span> <span class="kw">HAVING</span> <span class="fn">avg</span><span class="id">(salary)</span> &gt;=<span class="nm">1000</span><span class="sc">;</span></span></div>
              <div class="ln"><span class="gut"></span><span class="src"></span></div>
              <div class="ln"><span class="gut"><svg class="fold"><use href="#fold"/></svg></span><span class="src"><span class="cm">--사원의 이름, 부서번호, 부서명, 부서의 위치</span></span></div>
              <div class="ln"><span class="gut"></span><span class="src"><span class="kw">SELECT</span> <span class="id">Last_name</span>, <span class="al">d</span>.<span class="id">department_id</span>, <span class="id">department_name</span>, <span class="al">l</span>.<span class="id">location_id</span></span></div>
              <div class="ln"><span class="gut"></span><span class="src"><span class="kw">FROM</span> <span class="tb">employees</span> <span class="al">e</span>, <span class="tb">departments</span> <span class="al">d</span>, <span class="tb">locations</span> <span class="al">l</span></span></div>
              <div class="ln"><span class="gut"></span><span class="src cur"><span class="kw">WHERE</span> <span class="al">e</span>.<span class="id">department_id</span>=<span class="al">d</span>.<span class="id">department_id</span> <span class="kw">AND</span> <span class="al">d</span>.<span class="id">location_id</span>=<span class="al">l</span>.<span class="id">location_id</span><span class="sc">;</span></span></div>
            </div>
          </div>
          <div class="hbar"><div class="hbar-l"></div><i class="arr-l"></i><i class="arr-r"></i></div>
        </div>
      </div>
      <div class="sash"><span class="sashbtn"><i class="tri-u"></i><i class="tri-d"></i></span></div>

      <div class="results">
        <div class="rstrip"><div class="rtab"><svg class="ic ml4"><use href="#grid"/></svg><span class="t ml6 w40 tight">Results 1</span><svg class="x ml7"><use href="#x"/></svg></div></div>
        <div class="filterbar">
          <div class="sqlbox">
            <svg class="ic ml1"><use href="#sqlt"/></svg><span class="sqltext ml7">SELECT Last_name, d.department_id, department_name, l.location_i</span><i class="vline ml4"></i><svg class="ic ml3"><use href="#expand"/></svg>
            <span class="ph ml6">Enter a SQL expression to filter results (use Ctrl+Space)</span>
            <i class="tri-r"></i><i class="vline ml11"></i><i class="dd g ml5"></i>
          </div>
          <svg class="ic ml9"><use href="#eraser"/></svg><i class="dd ml6"></i><svg class="ic ml9"><use href="#funnel"/></svg><i class="dd ml6"></i><svg class="ic ml7"><use href="#back"/></svg><i class="dd g ml7"></i><svg class="ic ml7"><use href="#fwd"/></svg><i class="dd g ml6"></i>
        </div>
        <div class="gridarea">
          <aside class="modes">
            <div class="modebtn on"><span class="vt">그리드</span><svg class="ic"><use href="#grid"/></svg></div>
            <div class="modebtn m2"><span class="vt">텍스트</span><svg class="ic"><use href="#sqlt"/></svg></div>
            <div class="modebtn m3"><span class="vt">Record</span></div>
          </aside>
          <div class="dtable">
            <div class="drow dhead">
              <div class="hc"><i class="ring"></i></div>
              <div class="hc on"><span class="az">A<sub>z</sub><i class="odot"></i></span><span class="hl">LAST_NAME</span><i class="sort"></i></div>
              <div class="hc"><span class="n123">123</span><span class="hl">DEPARTMENT_ID</span><i class="sort"></i></div>
              <div class="hc"><span class="az">A<sub>z</sub><i class="odot"></i></span><span class="hl">DEPARTMENT_NAME</span><i class="sort"></i></div>
              <div class="hc"><span class="n123">123</span><span class="hl">LOCATION_ID</span><i class="sort"></i></div>
              <div class="hfill"></div>
            </div>
            <div class="drow s"><div class="no on">1</div><div class="c cursor">Abel</div><div class="c r">80</div><div class="c">Sales</div><div class="c r">2,500</div><div class="f"></div></div>
            <div class="drow"><div class="no">2</div><div class="c">Ande</div><div class="c r">80</div><div class="c">Sales</div><div class="c r">2,500</div><div class="f"></div></div>
            <div class="drow a"><div class="no">3</div><div class="c">Atkinson</div><div class="c r">50</div><div class="c">Shipping</div><div class="c r">1,500</div><div class="f"></div></div>
            <div class="drow"><div class="no">4</div><div class="c">Austin</div><div class="c r">60</div><div class="c">IT</div><div class="c r">1,400</div><div class="f"></div></div>
            <div class="drow a"><div class="no">5</div><div class="c">Baer</div><div class="c r">70</div><div class="c">Public Relations</div><div class="c r">2,700</div><div class="f"></div></div>
            <div class="drow"><div class="no">6</div><div class="c">Baida</div><div class="c r">30</div><div class="c">Purchasing</div><div class="c r">1,700</div><div class="f"></div></div>
            <div class="drow a"><div class="no">7</div><div class="c">Banda</div><div class="c r">80</div><div class="c">Sales</div><div class="c r">2,500</div><div class="f"></div></div>
            <div class="drow"><div class="no">8</div><div class="c">Bates</div><div class="c r">80</div><div class="c">Sales</div><div class="c r">2,500</div><div class="f"></div></div>
          </div>
          <div class="vsash"><i></i></div>
          <div class="valuepanel">
            <div class="vstrip"><div class="vvtab"><svg class="ic ml3"><use href="#value"/></svg><span class="t ml3 w30">Value</span><svg class="x ml6"><use href="#x"/></svg></div><svg class="links ml-v1"><use href="#links"/></svg><svg class="x ml13"><use href="#min"/></svg></div>
            <div class="vbody"><div class="vtext">Abel</div><div class="vscroll"><i class="tri-u g"></i><i class="tri-d g"></i></div></div>
          </div>
          <aside class="panels">
            <div class="pbtn"><svg class="ic"><use href="#value"/></svg><span class="vt pv">Panels</span></div>
            <svg class="ic"><use href="#links"/></svg><svg class="ic"><use href="#gauge"/></svg><svg class="ic"><use href="#grid"/></svg><svg class="ic"><use href="#cols"/></svg>
            <div class="pbtn2"><svg class="ic"><use href="#value"/></svg></div>
          </aside>
        </div>
        <div class="rtools">
          <svg class="ic ml5 note"><use href="#note"/></svg><svg class="ic ml14"><use href="#refresh"/></svg><span class="t ml4 w39">Refresh</span><i class="dd ml13"></i><i class="grip ml8"></i>
          <svg class="ic ml8"><use href="#save-off"/></svg><span class="t off ml5 w23">Save</span><i class="dd g ml13"></i><svg class="ic ml7"><use href="#cancel-off"/></svg><span class="t off ml4 w35">Cancel</span><i class="grip ml9"></i>
          <svg class="ic ml8"><use href="#ed"/></svg><svg class="ic ml7"><use href="#radd"/></svg><svg class="ic ml8"><use href="#rdup"/></svg><svg class="ic ml9"><use href="#rdel"/></svg><i class="grip ml8"></i>
          <svg class="ic ml5"><use href="#first"/></svg><svg class="ic ml6"><use href="#prev"/></svg><svg class="ic ml8"><use href="#next"/></svg><svg class="ic ml6"><use href="#last"/></svg><svg class="ic ml7"><use href="#page"/></svg><i class="grip ml11"></i>
          <svg class="ic ml7"><use href="#export"/></svg><span class="t ml7 w75">데이터 추출 ...</span><i class="dd ml12"></i><i class="grip ml9"></i>
          <svg class="ic ml4"><use href="#gear"/></svg><span class="fetchbox ml9">200</span><svg class="ic ml7"><use href="#fetch"/></svg><span class="t ml8 w18">106</span><i class="grip ml7"></i>
          <span class="t ml22 w8">···</span><span class="t ml15 w352 tight">106 row(s) fetched - 0.006s (0.002s fetch), on 2024-11-27 at 17:18:23</span><svg class="ic ml-r1"><use href="#export"/></svg>
        </div>
      </div>

      <div class="lower">
        <div class="ltabs">
          <div class="ltab w88"><svg class="ic ml5"><use href="#table"/></svg><span class="t ml4 w64 tight">EMPLOYEES</span></div>
          <div class="ltab w93"><svg class="ic ml31"><use href="#doc"/></svg><span class="t ml4 w16">HR</span></div>
          <div class="ltab active"><svg class="ic ml4"><use href="#table"/></svg><span class="t ml4 w64">LOCATIONS</span><svg class="x ml7"><use href="#x"/></svg></div>
          <div class="ltab"><svg class="ic ml4"><use href="#table"/></svg><span class="t ml4 w81 tight">DEPARTMENTS</span></div>
        </div>
        <div class="stabs">
          <div class="stab active w80"><svg class="ic ml4"><use href="#table"/></svg><span class="t ml4 w53 tight">Properties</span></div>
          <div class="stab w53"><svg class="ic ml4"><use href="#dataic"/></svg><span class="t ml4 w25">Data</span></div>
          <div class="stab w105"><svg class="ic ml4"><use href="#erd"/></svg><span class="t ml5 w75">엔티티 관계도</span></div>
          <div class="crumbs">
            <svg class="ic"><use href="#ora"/></svg><span class="t ml4 w19">HR</span>
            <svg class="ic ml12"><use href="#fschema"/></svg><span class="t ml4 w51">Schemas</span><i class="dd ml10"></i>
            <svg class="ic ml9"><use href="#doc"/></svg><span class="t ml3 w16">HR</span>
            <svg class="ic ml13"><use href="#fschema"/></svg><span class="t ml4 w38">Tables</span><i class="dd ml8"></i>
            <svg class="ic ml8"><use href="#table"/></svg><span class="t ml4">LOCATIONS</span>
          </div>
        </div>
        <div class="form">
          <div class="fleft">
            <div class="frow"><label class="lb">Name:</label><span class="inp wfull">LOCATIONS</span></div>
            <div class="frow mt7"><label class="lb">Tablespace:</label><span class="combo">USERS<svg class="comboarrow"><use href="#chev-thin"/></svg></span></div>
            <div class="frow mt7 top"><label class="lb lbt">Comment:</label>
              <div class="textarea"><p>Locations table that contains specific address of a specific office,<br>warehouse, and/or production site of a company. Does not store addresses /<br>locations of customers. Contains 23 rows; references with the<br>departments and countries tables.</p><div class="tascroll"><i class="tri-u g"></i><i class="tri-d g"></i></div></div>
            </div>
          </div>
          <div class="fright">
            <div class="rrow h18"><label class="rl">Table Type:</label><span class="na">N/A</span></div>
            <div class="rrow mt5"><label class="rl">IOT Type:</label><span class="dis"></span></div>
            <div class="rrow mt6"><label class="rl">IOT Name:</label><span class="dis"></span></div>
            <div class="rrow checks"><label class="rl"></label>
              <span class="cb"></span><span class="cbt w57">Temporary</span><span class="cb ml9"></span><span class="cbt w55">Secondary</span><span class="cb ml8"></span><span class="cbt w36">Nested</span><span class="cb ml9"></span><span class="cbt">Partitioned</span>
            </div>
            <div class="rrow mt9"><label class="rl">Created:</label><span class="dis">2014-05-29 13:21:53.0</span></div>
            <div class="rrow mt6"><label class="rl">Last Changed:</label><span class="dis">2014-05-29 13:21:54.0</span></div>
          </div>
        </div>
        <div class="sash2"><span class="sashbtn"><i class="tri-u"></i><i class="tri-d"></i></span></div>
        <div class="colsarea">
          <aside class="ctabs">
            <div class="ctab on"><svg class="ic"><use href="#cols"/></svg><span class="t b ml4">Columns</span></div>
            <div class="ctab"><svg class="ic"><use href="#constr"/></svg><span class="t ml4">Constraints</span></div>
            <div class="ctab"><svg class="ic"><use href="#gfolder"/></svg><span class="t ml4">Foreign Keys</span></div>
            <div class="ctab"><svg class="ic"><use href="#gfolder"/></svg><span class="t ml4">References</span></div>
            <div class="cmore">▽</div>
          </aside>
          <div class="ctable">
            <div class="crow chead"><div class="cc">컬럼명</div><div class="cc r">#</div><div class="cc">Type</div><div class="cc">Type Mod</div><div class="cc mid">Not Null</div><div class="cc">디폴트</div><div class="cc">Comment</div><div></div></div>
            <div class="crow"><div class="cc nm1"><span class="azs">A-Z</span>STREET_ADDRESS</div><div class="cc r">2</div><div class="cc">VARCHAR2(40)</div><div class="cc"></div><div class="cc mid">[ ]</div><div class="cc"></div><div class="cc">Street address o...</div><div></div></div>
            <div class="crow hi"><div class="cc nm1"><span class="azs">A-Z</span>POSTAL_CODE</div><div class="cc r">3</div><div class="cc">VARCHAR2(12)</div><div class="cc"></div><div class="cc mid">[ ]</div><div class="cc"></div><div class="cc">Postal code of t...</div><div></div></div>
            <div class="crow"><div class="cc nm1"><span class="azs">A-Z</span>CITY</div><div class="cc r">4</div><div class="cc">VARCHAR2(30)</div><div class="cc"></div><div class="cc mid">[v]</div><div class="cc"></div><div class="cc">A not null colu...</div><div></div></div>
            <div class="crow"><div class="cc nm1"><span class="azs">A-Z</span>STATE_PROVINCE</div><div class="cc r">5</div><div class="cc">VARCHAR2(25)</div><div class="cc"></div><div class="cc mid">[ ]</div><div class="cc"></div><div class="cc">State or Provinc...</div><div></div></div>
            <div class="crow"><div class="cc nm1"><span class="azs">A-Z</span>COUNTRY_ID</div><div class="cc r">6</div><div class="cc">CHAR(2)</div><div class="cc"></div><div class="cc mid">[ ]</div><div class="cc"></div><div class="cc">Country where ...</div><div></div></div>
            <div class="crow last"><div class="cc"></div><div class="cc"></div><div class="cc"></div><div class="cc"></div><div class="cc"></div><div class="cc"></div><div class="cc"></div><div></div></div>
          </div>
        </div>
        <div class="btools">
          <svg class="ic ml9"><use href="#refresh"/></svg><span class="t ml4 w39">Refresh</span><svg class="ic ml11"><use href="#saveg"/></svg><span class="t ml5 w37">Save ...</span><svg class="ic ml12"><use href="#revert"/></svg><span class="t off ml3 w33">Revert</span><i class="sep ml10"></i>
          <svg class="ic ml9"><use href="#pencil"/></svg><svg class="ic ml8"><use href="#colb"/></svg><svg class="ic ml8"><use href="#trash"/></svg><i class="sep ml6"></i>
          <svg class="ic ml8"><use href="#funnel"/></svg><svg class="ic ml9"><use href="#gear"/></svg><svg class="ic ml8"><use href="#struct"/></svg><i class="grip ml13"></i>
          <span class="t ml8 w80 tight">POSTAL_CODE</span><svg class="ic ml-r2 c-blue"><use href="#search"/></svg>
        </div>
      </div>
    </section>
  </main>

  <footer class="status">
    <span class="st s1">KST</span><span class="st s2">ko_KR</span><span class="st s3">Writable</span><span class="st s4">Smart Insert</span><span class="st s5">18 : 37 : 505</span><span class="st s6">Sel: 0 | 0</span><span class="st s7"></span><i class="grip sgrip"></i>
  </footer>
</div>
</body>
</html>
```

FILE: styles.css
```css
* { box-sizing: border-box; }
html, body { margin: 0; padding: 0; }
body { font: 12px/16px Roboto, "Noto Sans CJK KR", sans-serif; color: #1a1a1a; background: #eee; overflow: hidden; }
.defs { display: none; }
.app { width: 1906px; height: 1028px; display: flex; flex-direction: column; overflow: hidden; background: #eee; }
i { display: block; font-style: normal; flex: none; }

/* spacing helpers */
.ml1{margin-left:1px}.ml2{margin-left:2px}.ml3{margin-left:3px}.ml4{margin-left:4px}.ml5{margin-left:5px}.ml6{margin-left:6px}.ml7{margin-left:7px}.ml8{margin-left:8px}.ml9{margin-left:9px}.ml10{margin-left:10px}.ml11{margin-left:11px}.ml12{margin-left:12px}.ml13{margin-left:13px}.ml14{margin-left:14px}.ml15{margin-left:15px}.ml16{margin-left:16px}.ml17{margin-left:17px}.ml22{margin-left:22px}.ml31{margin-left:31px}.ml64{margin-left:64px}.ml71{margin-left:71px}
.w8{width:8px}.w15{width:15px}.w16{width:16px}.w18{width:18px}.w19{width:19px}.w20{width:20px}.w22{width:22px}.w23{width:23px}.w25{width:25px}.w30{width:30px}.w33{width:33px}.w35{width:35px}.w36{width:36px}.w37{width:37px}.w38{width:38px}.w39{width:39px}.w40{width:40px}.w41{width:41px}.w48{width:48px}.w51{width:51px}.w53{width:53px}.w54{width:54px}.w55{width:55px}.w57{width:57px}.w61{width:61px}.w64{width:64px}.w75{width:75px}.w76{width:76px}.w80{width:80px}.w81{width:81px}.w88{width:88px}.w89{width:89px}.w93{width:93px}.w105{width:105px}.w139{width:139px}.w155{width:155px}.w352{width:352px}
.tight { letter-spacing: -.25px; }

/* generic atoms */
.ic { width: 16px; height: 16px; flex: none; display: block; }
.x { width: 12px; height: 12px; flex: none; display: block; }
.links { width: 8px; height: 16px; flex: none; display: block; }
.t { white-space: nowrap; flex: none; display: block; }
.off { color: #9a9a9a; }
.b { font-weight: 700; }
.c-gray { color: #8d8d8d; }
.c-blue { color: #1b84cf; }
.dd { width: 8px; height: 5px; border-left: 4px solid transparent; border-right: 4px solid transparent; border-top: 5px solid #333; }
.dd.g { border-top-color: #8a8a8a; }
.grip { width: 2px; height: 18px; background: repeating-linear-gradient(#aaa 0 2px, transparent 2px 4px); }
.sep { width: 1px; height: 26px; background: #9a9a9a; flex: none; }
.vline { width: 1px; height: 19px; background: #888; }

/* window chrome */
.titlebar { height: 23px; background: #f3f2ee; display: flex; align-items: center; flex: none; }
.logo { margin-left: 4px; }
.title { margin-left: 3px; }
.winctl { display: block; width: 14px; text-align: center; font-size: 12px; }
.win-min { margin-left: 1623px; }
.win-res { margin-left: 31px; }
.win-x { margin-left: 31px; }
.menubar { height: 18px; background: #fff; display: flex; align-items: center; flex: none; }
.m { display: block; white-space: nowrap; flex: none; }
.toolbar { height: 32px; display: flex; align-items: center; flex: none; background: #eee; }
.autobox { width: 71px; height: 21px; border: 1px solid #999; background: #fff; text-align: center; line-height: 20px; flex: none; }
.ml-far { margin-left: 1055px; }
.perspbtn { width: 22px; height: 26px; padding: 4px 2px; flex: none; background: #cfe6fa; border: 1px solid #9cc9f0; border-radius: 2px; }

/* main layout */
.main { height: 932px; display: flex; flex: none; }
.leftcol { width: 342px; flex: none; display: flex; flex-direction: column; }
.rightcol { width: 1559px; margin-left: 5px; padding-top: 11px; flex: none; display: flex; flex-direction: column; overflow: hidden; }
.panel { display: flex; flex-direction: column; border-right: 1px solid #ddd; }
.p-nav { height: 650px; border-bottom: 1px solid #d8d8d8; }
.p-proj { height: 278px; margin-top: 4px; border-top: 1px solid #d8d8d8; border-bottom: 1px solid #d0d0d0; }
.strip { height: 26px; background: #e7e7e7; border-bottom: 1px solid #d4d4d4; display: flex; align-items: center; flex: none; }
.s25 { height: 25px; }
.vtab { height: 100%; background: #f0f0f0; display: flex; align-items: center; flex: none; border-right: 1px solid #d8d8d8; }
.navtools { height: 21px; display: flex; align-items: center; padding-left: 275px; background: #f0f0f0; flex: none; }
.navfilter { height: 23px; display: flex; align-items: center; background: #f0f0f0; flex: none; }
.filterin { width: 297px; height: 20px; background: #fff; border-bottom: 1px solid #888; line-height: 19px; padding-left: 3px; color: #555; flex: none; }
.tree { flex: 1; background: #fff; }
.tr { height: 18px; display: flex; align-items: center; padding-left: 4px; white-space: nowrap; }
.l1 { padding-left: 20px; }
.l2 { padding-left: 36px; }
.sel { background: #d9d9d9; border-radius: 3px; }
.ch { width: 12px; height: 12px; flex: none; }
.l2 .ic { width: 14px; height: 14px; margin-right: 3px; margin-left: 2px; }
.tl { margin-left: 5px; }
.tl em { color: #8a8a8a; margin-left: 2px; }
.projhead { height: 24px; background: #fff; display: flex; align-items: center; flex: none; }
.ph-name { width: 249px; padding-left: 6px; line-height: 24px; border-right: 1px solid #e2e2e2; flex: none; }
.ph-ds { padding-left: 6px; }
.projtree { flex: 1; background: #fff; }
.projscroll { height: 17px; background: #f0f0f0; padding: 7px 0 0 17px; flex: none; }
.thumb { width: 248px; height: 2px; background: #888; }

/* editor */
.edstrip { height: 26px; border-top: 1px solid #d4d4d4; border-bottom: 1px solid #d8d8d8; flex: none; background: #f0f0f0; }
.edtab { width: 123px; height: 25px; border-bottom: 3px solid #5b8fd9; margin-left: 1px; display: flex; align-items: center; background: #f3f3f3; }
.edt { letter-spacing: .3px; }
.editor { height: 149px; display: flex; flex: none; }
.edside { width: 26px; display: flex; flex-direction: column; align-items: center; padding-top: 7px; gap: 6px; flex: none; }
.edbody { flex: 1; padding-top: 5px; display: flex; flex-direction: column; }
.edtext { height: 125px; display: flex; flex: none; margin-right: 6px; }
.rul1 { width: 12px; background: #f6f6f6; flex: none; }
.rul2 { width: 8px; background: #e8e8f4; flex: none; }
.code { flex: 1; background: #fff; display: flex; flex-direction: column; font: 12px/16px "Liberation Mono", monospace; letter-spacing: -.2px; }
.ln { height: 15px; display: flex; flex: none; white-space: pre; overflow: hidden; }
.cut { height: 5px; align-items: flex-end; }
.gut { width: 24px; flex: none; padding: 3px 0 0 12px; }
.fold { width: 10px; height: 10px; display: block; }
.src { flex: 1; height: 15px; color: #222; }
.cur { background: #e8f2fe; }
.kw { color: #7f0a2e; font-weight: 700; }
.id { color: #00757a; }
.fn { color: #13136f; font-weight: 700; }
.tb { color: #8d2cc0; }
.al { color: #8d2cc0; font-style: italic; }
.cm { color: #8a8a8a; font-family: "Liberation Mono", "Noto Sans CJK KR", monospace; letter-spacing: -.7px; }
.nm { color: #0000ee; }
.sc { color: #e01010; }
.hbar { height: 16px; display: flex; align-items: center; flex: none; }
.hbar-l { width: 42px; height: 100%; background: #f6f6f6; flex: none; }
.arr-l { margin-left: 4px; border-right: 5px solid #999; border-top: 5px solid transparent; border-bottom: 5px solid transparent; }
.arr-r { margin-left: 1457px; border-left: 5px solid #777; border-top: 5px solid transparent; border-bottom: 5px solid transparent; }
.sash { height: 2px; background: #a9c1da; position: relative; flex: none; margin-top: 1px; }
.sashbtn { position: absolute; left: 758px; top: -4px; width: 55px; height: 9px; background: #e8e8e8; border: 1px solid #a9c1da; border-radius: 2px; display: flex; align-items: center; justify-content: center; gap: 3px; }
.tri-u { width: 0; height: 0; border-left: 5px solid transparent; border-right: 5px solid transparent; border-bottom: 5px solid #9db3c9; }
.tri-d { width: 0; height: 0; border-left: 5px solid transparent; border-right: 5px solid transparent; border-top: 5px solid #9db3c9; }
.tri-u.g { border-bottom-color: #aaa; }
.tri-d.g { border-top-color: #aaa; }

/* results */
.results { height: 265px; flex: none; display: flex; flex-direction: column; }
.rstrip { height: 24px; border-bottom: 1px solid #999; padding-top: 4px; flex: none; }
.rtab { width: 95px; height: 20px; margin-left: 1px; border-top: 2px solid #1b6fb8; border-right: 1px solid #999; background: #f4f4f4; display: flex; align-items: center; padding-bottom: 2px; }
.filterbar { height: 30px; display: flex; align-items: center; flex: none; }
.sqlbox { width: 1395px; height: 23px; margin-left: 5px; background: #fff; border: 1px solid #aaa; display: flex; align-items: center; flex: none; padding: 0 6px 3px 0; }
.sqltext { width: 360px; overflow: hidden; white-space: nowrap; color: #0a7d0a; flex: none; }
.ph { flex: 1; color: #a8a8a8; font-style: italic; white-space: nowrap; }
.tri-r { border-left: 8px solid #8a8a8a; border-top: 6px solid transparent; border-bottom: 6px solid transparent; }
.gridarea { height: 181px; display: flex; flex: none; }
.modes { width: 25px; flex: none; padding: 0 0 0 3px; display: flex; flex-direction: column; }
.modebtn { width: 20px; display: flex; flex-direction: column; align-items: center; gap: 3px; }
.modebtn .ic { width: 16px; }
.on.modebtn { height: 68px; border: 1px solid #aaa; background: #e8e8e8; padding-top: 5px; }
.m2 { margin-top: 7px; }
.m3 { margin-top: 12px; }
.vt { writing-mode: vertical-rl; transform: rotate(180deg); white-space: nowrap; display: block; line-height: 16px; font-size: 12px; }
.dtable { width: 1044px; flex: none; background: #fff; overflow: hidden; }
.drow { display: grid; grid-template-columns: 39px 130px 156px 179px 139px 1fr; height: 19px; }
.drow > div { border-bottom: 1px solid #eee; }
.dhead { height: 27px; }
.hc { background: #f0f0f0; border-right: 1px solid #999; border-bottom: 1px solid #aaa !important; display: flex; align-items: center; padding-left: 7px; padding-bottom: 3px; position: relative; white-space: nowrap; }
.hc.on { background: #85b8e8; }
.hfill { background: #f0f0f0; border-bottom: 0 !important; }
.ring { width: 10px; height: 10px; border: 2px solid #3fa63f; border-radius: 50%; margin-left: 17px; background: radial-gradient(circle, #3fa63f 0 2px, #fff 2.5px); }
.az { width: 19px; font-size: 11px; color: #4b90cf; position: relative; flex: none; font-weight: 700; }
.az sub { font-size: 8px; }
.odot { position: absolute; left: 7px; top: 8px; width: 7px; height: 7px; background: #f08a00; border-radius: 50%; }
.n123 { width: 19px; font-size: 10px; color: #4b90cf; flex: none; }
.hl { flex: none; }
.sort { position: absolute; right: 8px; top: 8px; border-left: 5px solid transparent; border-right: 5px solid transparent; border-top: 6px solid #0f8dd6; }
.no { background: #f0f0f0; padding-left: 4px; line-height: 19px; border-right: 1px solid #d8d8d8; border-bottom: 1px solid #ddd !important; }
.no.on { background: #82b8e8; }
.c { padding: 0 6px; line-height: 18px; border-right: 1px solid #eee; white-space: nowrap; }
.r { text-align: right; }
.s .c { background: #bdd4ea; border-bottom-color: #fff; }
.a .c { background: #dce6f2; }
.s .c.cursor { background: #6aa8e0; color: #fff; border: 2px solid #111; line-height: 15px; padding-left: 4px; }
.vsash { width: 23px; flex: none; padding: 17px 0 0 8px; }
.vsash i { width: 2px; height: 17px; background: #999; }
.valuepanel { width: 458px; flex: none; display: flex; flex-direction: column; }
.vstrip { height: 24px; display: flex; align-items: flex-end; border-bottom: 1px solid #aaa; flex: none; }
.vvtab { width: 76px; height: 24px; border-top: 2px solid #666; border-right: 1px solid #999; background: #f2f2f2; display: flex; align-items: center; flex: none; }
.ml-v1 { margin-left: 336px; margin-bottom: 3px; }
.vstrip .x { margin-bottom: 6px; }
.vbody { flex: 1; display: flex; height: 157px; }
.vtext { width: 438px; background: #fff; font: 13px/15px "Liberation Mono", monospace; padding-top: 2px; flex: none; }
.vscroll { width: 20px; background: #efefef; display: flex; flex-direction: column; align-items: center; justify-content: space-between; padding: 7px 0 3px; flex: none; }
.panels { width: 9px; flex: none; overflow: hidden; display: flex; flex-direction: column; gap: 7px; }
.pbtn { height: 64px; width: 18px; border: 1px solid #aaa; background: #e8e8e8; display: flex; flex-direction: column; align-items: center; flex: none; }
.pbtn .ic { width: 12px; height: 12px; flex: none; }
.pbtn2 { width: 18px; height: 20px; border: 1px solid #777; flex: none; }
.panels > .ic { flex: none; }
.pv { margin-top: 2px; }
.rtools { height: 30px; display: flex; align-items: center; border-bottom: 1px solid #ccc; flex: none; }
.note { margin-bottom: 10px; }
.fetchbox { width: 51px; height: 20px; background: #fff; border-bottom: 1px solid #999; padding-left: 3px; line-height: 18px; flex: none; }
.ml-r1 { margin-left: 376px; }

/* lower area */
.lower { height: 473px; margin-top: 6px; background: #e4e4e4; display: flex; flex-direction: column; border-top: 1px solid #d4d4d4; overflow: hidden; flex: none; }
.ltabs { height: 24px; display: flex; border-bottom: 1px solid #d0d0d0; flex: none; }
.ltab { display: flex; align-items: center; height: 100%; flex: none; padding-bottom: 2px; }
.ltab.active { width: 114px; background: #eee; margin-left: 0; }
.w93.ltab { width: 93px; }
.stabs { height: 32px; display: flex; border-bottom: 1px solid #999; flex: none; }
.stab { display: flex; align-items: center; height: 31px; border-right: 1px solid #999; flex: none; padding-bottom: 2px; }
.stab.active { margin-left: 1px; border-top: 2px solid #6e6e6e; width: 80px; }
.crumbs { margin-left: 955px; display: flex; align-items: center; flex: none; white-space: nowrap; padding-bottom: 2px; }
.form { height: 258px; display: flex; padding: 10px 0 0 11px; flex: none; }
.fleft { width: 505px; flex: none; }
.frow { display: flex; align-items: center; }
.mt7 { margin-top: 7px; }
.top { align-items: flex-start; }
.lb { width: 70px; flex: none; }
.lbt { margin-top: -1px; }
.inp { height: 20px; background: #fff; border-bottom: 1px solid #888; padding-left: 4px; line-height: 19px; }
.wfull { width: 435px; }
.combo { width: 159px; height: 21px; background: #fbfbfb; border: 1px solid #ddd; padding-left: 3px; line-height: 19px; position: relative; }
.comboarrow { position: absolute; right: 4px; top: 4px; width: 12px; height: 12px; }
.textarea { width: 435px; height: 177px; background: #fff; border-bottom: 1px solid #888; display: flex; }
.textarea p { margin: 0; width: 418px; padding: 3px 0 0 5px; line-height: 15px; flex: none; white-space: nowrap; }
.tascroll { width: 17px; background: #efefef; display: flex; flex-direction: column; align-items: center; justify-content: space-between; padding: 6px 0 6px; flex: none; }
.fright { margin-left: 17px; width: 504px; flex: none; }
.rrow { display: flex; align-items: center; height: 20px; }
.h18 { height: 18px; }
.na { padding-left: 4px; }
.mt5 { margin-top: 5px; }
.mt6 { margin-top: 6px; }
.mt9 { margin-top: 9px; }
.rl { width: 83px; flex: none; }
.dis { width: 421px; height: 20px; background: #efefef; border-bottom: 1px solid #888; border-top: 1px solid #f8f8f8; padding-left: 3px; line-height: 18px; flex: none; }
.checks { margin-top: 8px; height: 16px; color: #777; }
.checks .rl { width: 86px; }
.cb { width: 12px; height: 12px; border: 1px solid #bbb; border-radius: 3px; background: #f4f4f4; flex: none; }
.cbt { margin-left: 3px; flex: none; white-space: nowrap; display: block; }
.sash2 { height: 1px; background: #a9c1da; position: relative; flex: none; }
.sash2 .sashbtn { top: -4px; }
.colsarea { height: 130px; display: flex; padding-top: 4px; flex: none; border-bottom: 1px solid #aaa; }
.ctabs { width: 117px; flex: none; padding-top: 10px; display: flex; flex-direction: column; }
.ctab { height: 21px; display: flex; align-items: center; background: #c9c9c9; border-bottom: 1px solid #eee; flex: none; margin-bottom: 1px; padding-left: 5px; }
.ctab.on { background: #fff; }
.cmore { margin-top: 18px; height: 10px; border-top: 1px solid #bbb; text-align: center; line-height: 10px; font-size: 10px; color: #777; }
.ctable { width: 1436px; background: #fff; flex: none; }
.crow { display: grid; grid-template-columns: 136px 99px 101px 100px 99px 101px 100px 1fr; height: 18px; border-bottom: 1px solid #e4e4e4; line-height: 19px; }
.chead { height: 23px; line-height: 22px; border-bottom: 0; }
.cc { padding-left: 6px; border-right: 1px solid #e8e8e8; white-space: nowrap; overflow: hidden; }
.cc.r { text-align: right; padding-right: 4px; }
.mid { text-align: center; padding-left: 0; }
.nm1 { padding-left: 22px; display: flex; align-items: center; letter-spacing: -.35px; padding-top: 1px; }
.azs { width: 19px; font-size: 9px; font-weight: 700; color: #3f8ed2; flex: none; letter-spacing: 0; }
.hi { background: #d9d9d9; }
.last { height: 12px; border-bottom: 0; }
.btools { height: 26px; display: flex; align-items: center; flex: none; }
.btools .sep { height: 22px; }
.ml-r2 { margin-left: 1076px; }

/* status */
.status { height: 23px; display: flex; align-items: center; flex: none; padding-left: 917px; }
.st { height: 23px; border-left: 1px solid #999; padding-left: 7px; line-height: 23px; display: block; flex: none; }
.s1 { width: 34px; }
.s2 { width: 46px; }
.s3 { width: 133px; }
.s4 { width: 128px; }
.s5 { width: 129px; }
.s6 { width: 85px; }
.s7 { width: 1px; padding: 0; }
.sgrip { margin-left: 162px; }
```
